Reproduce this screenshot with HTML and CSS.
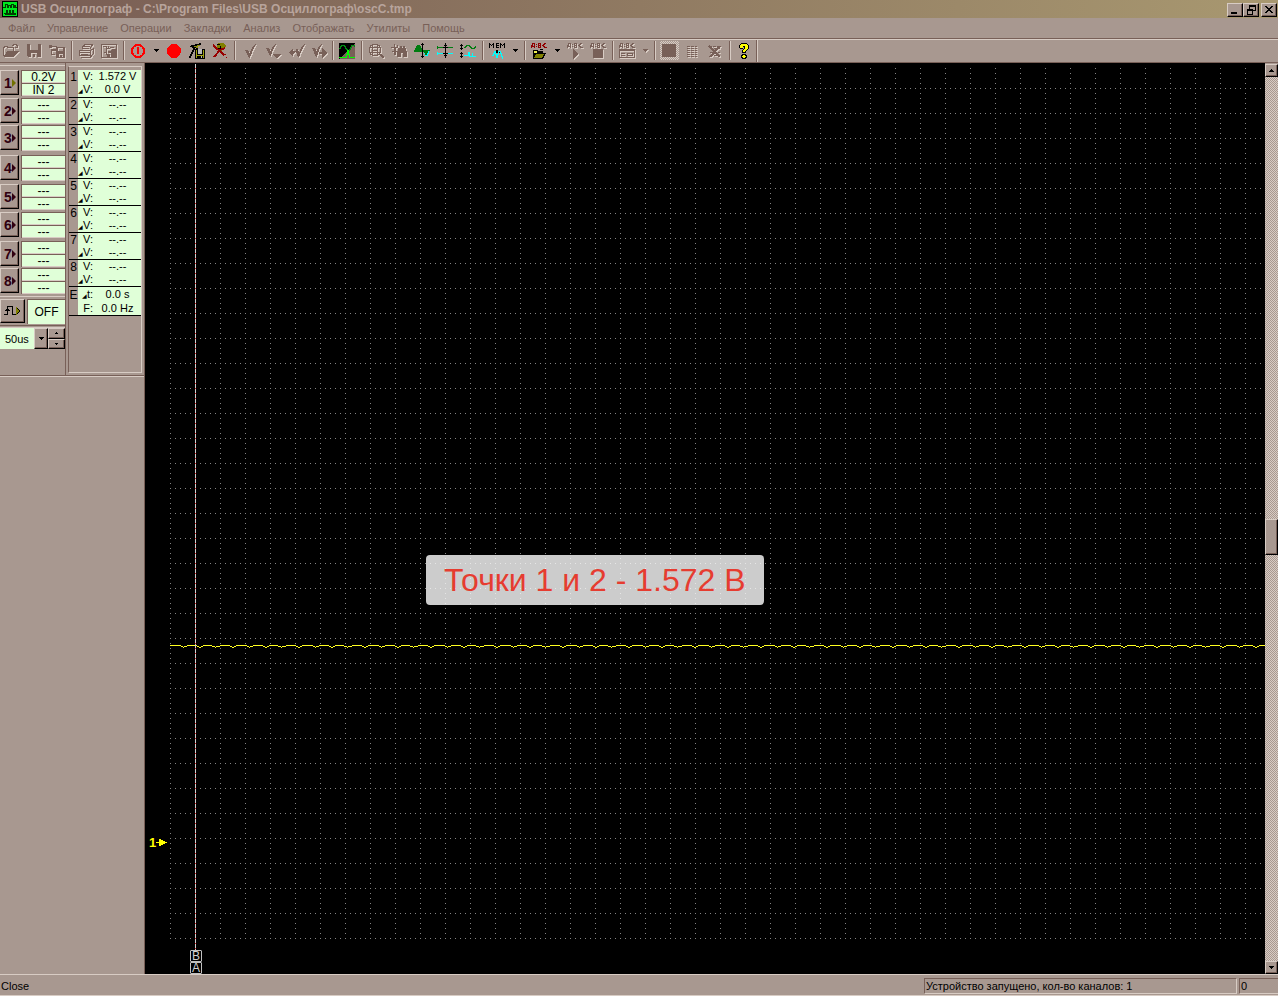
FILE: index.html
```
<!DOCTYPE html>
<html lang="ru">
<head>
    <meta charset="UTF-8">
    <meta name="viewport" content="width=device-width, initial-scale=1.0">
    <title>USB Осциллограф</title>
    <link rel="stylesheet" href="styles.css">
</head>
<body>

<header class="titlebar">
    <svg class="app-icon" viewBox="0 0 16 16"><path fill="#000" d="M0 0h16v16H0z"/><path fill="#00e820" d="M1 1h14v14H1z"/><path fill="none" stroke="#003c00" d="M1 6.500h2V3.500h2v3h1V4.500h2v2h1V3.500h2v3h1V4.500h1v2h2M2 12.500h2v-3h1v3h2v-3h1v3h2v-3h1v3h3M3 13.500h11"/></svg>
    <h1>USB Осциллограф - C:\Program Files\USB Осциллограф\oscC.tmp</h1>
    <div class="window-buttons">
        <button aria-label="Свернуть"><svg viewBox="0 0 12 10"><path d="M2 7h6v2H2z"/></svg></button>
        <button aria-label="Восстановить"><svg viewBox="0 0 12 10"><path fill="none" stroke="#000" d="M4.500 4V.500h6v5H8M4 1.500h7M2.500 4.500h5v5h-5zM2 5.500h6"/></svg></button>
        <button class="close" aria-label="Закрыть"><svg viewBox="0 0 12 10"><path d="M2 1h2v1h1v1h2V2h1V1h2v1H9v1H8v1H7v1h1v1h1v1h1v1H8V7H7V6H5v1H4v1H2V7h1V6h1V5h1V4H4V3H3V2H2z"/></svg></button>
    </div>
</header>

<nav class="menu">
    <button>Файл</button>
    <button>Управление</button>
    <button>Операции</button>
    <button>Закладки</button>
    <button>Анализ</button>
    <button>Отображать</button>
    <button>Утилиты</button>
    <button>Помощь</button>
</nav>

<div class="toolbar">
    <button class="dim" aria-label="Открыть"><svg viewBox="0 0 16 16"><path fill="none" stroke="#786058" d="M.500 13V4.500h1v-1h3v1h6V8M1 13.500h10M4 8.500h11.500M4.500 9l-3 4M15 9l-4 4M9 2.500h1v-1h3v1h1v2M12 4.500h3M14.500 2v3"/><path d="M4 9h10l-3 4H2z"/></svg></button>
    <button class="dim" aria-label="Сохранить"><svg viewBox="0 0 16 16"><path fill-rule="evenodd" d="M1 1h14v13H2l-1-1zM4 1v6h8V1zM5 10v4h2v-3h2v3h2v-4z"/></svg></button>
    <button class="dim" aria-label="Сохранить всё"><svg viewBox="0 0 16 16"><path fill-rule="evenodd" d="M0 2h3v3H0zM3 3h5v1H3zM2 6h5v2H3v3h3v1H2zM7 4h9v11H7zM9 5v3h5V5zM10 11v3h1v-2h2v2h1v-3z"/></svg></button>
    <span class="separator"></span>
    <button class="dim" aria-label="Печать"><svg viewBox="0 0 16 16"><path fill="none" stroke="#786058" d="M4.500 6V4L7 1.500h7.500L12 6M6 3.500h6M5 5.500h6M1.500 7.500h11v5h-11zM12.500 7.500l3-2v5l-3 3M2 9.500h10M3 11.500h7M3 14.500h9l2-2"/></svg></button>
    <button class="dim" aria-label="Печать осциллограммы"><svg viewBox="0 0 16 16"><path fill="none" stroke="#786058" d="M.500 1.500h15v13H.500zM2 3.500h3v8M3 9.500h2M6 5.500h3M7.500 3v3M9 4.500h4M11 6.500h4"/><path d="M7 8h3v2H7zM10 7h5v7h-5zM6 11h3v3H6z"/></svg></button>
    <span class="separator"></span>
    <button aria-label="Запуск"><svg viewBox="0 0 16 16"><g fill="none" stroke="#ff0000" stroke-width="2"><circle cx="8" cy="8" r="6"/><path d="M8 4v7"/></g></svg></button>
    <button class="drop" aria-label="Параметры запуска"><svg viewBox="0 0 5 3"><path d="M0 0h5v1H4v1H3v1H2V2H1V1H0z"/></svg></button>
    <button aria-label="Запись"><svg viewBox="0 0 16 16"><circle cx="8" cy="8" r="7" fill="#ff0000"/></svg></button>
    <button aria-label="Сохранить закладку"><svg viewBox="0 0 16 16"><path d="M2 2h4V1h4V0h2v2h-1v1H8v2h1v1H7V5H6v2H5v2H4v2H3v2H2v2H0v-2h1v-2h1V9h1V7h1V5H3V4H1V3h1z"/><path fill="#90900c" d="M5 3h3V2h3v1H9v2H7V4H5z"/><path d="M6 6h10v10H6z"/><path fill="#a0a010" d="M7 7h1v8H7zM14 7h1v8h-1zM8 12h6v1H8z"/><path fill="#b8b8b8" d="M9 6h4v5H9zM12 13h1v2h-1z"/></svg></button>
    <button aria-label="Удалить закладку"><svg viewBox="0 0 16 16"><path fill="#808000" d="M6 0h6l2 3-2 3h-2v3H8V5H5V2z"/><path fill="none" stroke="#000" d="M5 1.500h3M3 5.500h5M8.500 3v3M7 8l-5 6"/><path fill="none" stroke="#980000" stroke-width="2" d="M1 2l11 10M13 5l-5 2-6 7"/><path fill="#980000" d="M12 11h2v1h-2zM14 14h1v1h-1z"/></svg></button>
    <span class="separator"></span>
    <button class="dim check" aria-label="Закладка"><svg viewBox="0 0 16 16"><path d="M2 7h3l2 4V9l2-4 3-4h1l-3 6-2 5-1 3H6z"/></svg></button>
    <button class="dim check" aria-label="Закладка вниз"><svg viewBox="0 0 16 16"><path d="M0 5h3l2 4V7l2-4 2-2h1L7 7l-2 6H4zM6 11h9l-4 4z"/></svg></button>
    <button class="dim check" aria-label="Предыдущая закладка"><svg viewBox="0 0 16 16"><path d="M0 10l4-5v3h3V6h2l1 4 2-5 3-4h1l-3 6-3 7H9L7 9l-3 2v3z"/></svg></button>
    <button class="dim check" aria-label="Следующая закладка"><svg viewBox="0 0 16 16"><path d="M0 5h3l2 4V7l2-4 2-2h1L7 7l-2 7H4zM7 9h3V5l5 5-5 5v-4H7z"/></svg></button>
    <span class="separator"></span>
    <button aria-label="Анализ спектра"><svg viewBox="0 0 16 16"><path d="M0 0h16v16H0z"/><path fill="#786058" d="M16 0v16H1z"/><path fill="none" stroke="#008c10" d="M0 5.500h1v-2h1v-1h3v1h1v2h1v1h1v1h2v-1h1v-2h1v-2h3v1h1"/><path fill="none" stroke="#00ff00" d="M0 14.500h7v-3h1v-4h1v4h1v3h6"/></svg></button>
    <span class="separator"></span>
    <button class="dim" aria-label="Масштаб по сетке"><svg viewBox="0 0 16 16"><g fill="none" stroke="#786058"><circle cx="7" cy="7" r="6"/><path d="M1 4.500h12M1 9.500h12M4.500 2v10M9.500 2v10M4 7.500h6"/></g><path d="M11 11h2l3 3v1h-2z"/></svg></button>
    <button class="dim" aria-label="Поиск"><svg viewBox="0 0 16 16"><path fill-rule="evenodd" d="M0 4h3V1h1v3h2V2h1v3H5v3h2v1H5v3H3V9H1V8h2V5H0zM7 7V5h2V3h2v2h1V3h2v2h1v3h1v6h-4v-4h-2v4H6V9h1z"/></svg></button>
    <button aria-label="Сигнал целиком"><svg viewBox="0 0 16 16"><path fill="#00ffff" d="M6 7h10v1h-1v3h-1v2h-3v-2h-1V9H6z"/><path fill="#007c10" d="M0 7h1V5h1V3h1V2h3v1h1v2h1v2h8v1h-2v2h-1v2h-2v-2h-1V9H0z"/><path d="M8 0h1v15H8zM7 1h3v1H7zM7 13h3v1H7z"/></svg></button>
    <button aria-label="Сдвиг каналов"><svg viewBox="0 0 16 16"><path fill="#007c10" d="M0 4h16v1H0zM0 3h1v3H0z"/><path fill="#00ffff" d="M0 10h16v1H0zM0 9h1v3H0z"/><path d="M8 0h1v15H8zM7 2h3v1H7zM6 4h5v1H6zM6 10h5v1H6zM7 12h3v1H7z"/></svg></button>
    <button aria-label="Разнести каналы"><svg viewBox="0 0 16 16"><path fill="none" stroke="#007c10" d="M4 4.500h1v-1h1v-1h3v1h1v1h1v1h3v-1h1v-1h1"/><path fill="none" stroke="#00ffff" d="M4 12.500h4v-3h1v4h7M12.500 13v-3"/><path d="M1 1h1v6H1zM0 2h3v1H0zM0 5h3v1H0zM1 9h1v6H1zM0 10h3v1H0zM0 13h3v1H0z"/></svg></button>
    <span class="separator"></span>
    <button aria-label="Память"><svg viewBox="0 0 16 16"><path fill="none" stroke="#000" d="M.500 5V0M1 1.500h1M2 2.500h1M3 1.500h1M4.500 5V0M10 .500H7.500v4H10M8 2.500h2M11.500 5V0M12 1.500h1M13 2.500h1M14 1.500h1M15.500 5V0"/><path d="M7 7h2v1h1v1h1v1H5V9h1V8h1z"/><path fill="none" stroke="#00ffff" d="M3 12.500h1v-2h1v-2h1v3h1v3h1v-3h1v-3h2v2h1v3h1v2"/></svg></button>
    <button class="drop" aria-label="Список памяти"><svg viewBox="0 0 5 3"><path d="M0 0h5v1H4v1H3v1H2V2H1V1H0z"/></svg></button>
    <span class="separator"></span>
    <button aria-label="Открыть скрипт"><svg viewBox="0 0 16 16"><path fill="none" stroke="#900000" d="M.500 5V2h1V.500h2V5M1 3.500h2M5 1.500h1M5 3.500h1M7.500 5V.500h2v4H7M8 2.500h2M15 .500h-2v1h-1v2h1v1h3M11 2.500h1"/><path d="M2 7h5v1h5v2h3l-3 6H2zM9 6h3v1H9z"/><path fill="#f0f050" d="M3 8h3v2H3v4z"/><path fill="#808000" d="M5 11h8l-2 4H3z"/></svg></button>
    <button class="drop" aria-label="Список скриптов"><svg viewBox="0 0 5 3"><path d="M0 0h5v1H4v1H3v1H2V2H1V1H0z"/></svg></button>
    <button class="dim" aria-label="Запустить скрипт"><svg viewBox="0 0 16 16"><path fill="none" stroke="#786058" d="M.500 5V2h1V.500h2V5M1 3.500h2M5 1.500h1M5 3.500h1M7.500 5V.500h2v4H7M8 2.500h2M15 .500h-2v1h-1v2h1v1h3M11 2.500h1"/><path d="M6 6l6 5-6 5z"/></svg></button>
    <button class="dim" aria-label="Остановить скрипт"><svg viewBox="0 0 16 16"><path fill="none" stroke="#786058" d="M.500 5V2h1V.500h2V5M1 3.500h2M5 1.500h1M5 3.500h1M7.500 5V.500h2v4H7M8 2.500h2M15 .500h-2v1h-1v2h1v1h3M11 2.500h1"/><path d="M3 6h10v9H3z"/></svg></button>
    <span class="separator"></span>
    <button class="dim" aria-label="Окно скрипта"><svg viewBox="0 0 16 16"><path fill="none" stroke="#786058" d="M.500 5V2h1V.500h2V5M1 3.500h2M5 1.500h1M5 3.500h1M7.500 5V.500h2v4H7M8 2.500h2M15 .500h-2v1h-1v2h1v1h3M11 2.500h1M.500 6.500h15v8H.500zM1 7.500h14M2 10.500h4M2 12.500h4M8.500 10.500h5v2h-5z"/></svg></button>
    <button class="drop dim" aria-label="Окна скриптов"><svg viewBox="0 0 5 3"><path d="M0 0h5v1H4v1H3v1H2V2H1V1H0z"/></svg></button>
    <span class="separator"></span>
    <button class="pressed" aria-label="Сплошной фон"><svg viewBox="0 0 16 16"><path fill="#786058" d="M1 1h14v13H1z"/></svg></button>
    <button class="dim" aria-label="Сетка"><svg viewBox="0 0 16 16"><path fill="none" stroke="#786058" stroke-dasharray="3 1" d="M3 3.500h10M3 5.500h10M3 7.500h10M3 9.500h10M3 11.500h10M3 13.500h10"/></svg></button>
    <button class="dim" aria-label="Убрать сетку"><svg viewBox="0 0 16 16"><path fill="none" stroke="#786058" stroke-dasharray="3 1" d="M2 3.500h11M3 5.500h10M3 9.500h10M3 12.500h10"/><path fill="none" stroke="#786058" stroke-width="2" d="M2 3l11 11M13 3L3 14"/></svg></button>
    <span class="separator"></span>
    <button aria-label="Справка"><svg viewBox="0 0 16 16"><path d="M5 0h6v1h1v1h1v4h-1v1h-1v1h-1v2H6V7h1V6h1V4H7v2H4V5H3V2h1V1h1zM6 11h4v1h1v3h-1v1H6v-1H5v-3h1z"/><path fill="#ffff00" d="M5 1h6v1h1v4h-1v1h-1v1H9v1H7V7h1V6h1V3H7v2H4V2h1zM7 12h2v1h1v1H9v1H7v-1H6v-1h1z"/></svg></button>
    <span class="separator end"></span>
</div>

<main class="workspace">
    <aside class="panels">
        <section class="channels">
            <div class="channel-list">
                <button class="active"><b>1</b><i></i></button>
                <div><input type="text" value="0.2V" aria-label="Канал 1, предел" readonly><input type="text" value="IN 2" aria-label="Канал 1, вход" readonly></div>
                <button><b>2</b><i></i></button>
                <div><input type="text" value="---" aria-label="Канал 2, предел" readonly><input type="text" value="---" aria-label="Канал 2, вход" readonly></div>
                <button><b>3</b><i></i></button>
                <div><input type="text" value="---" aria-label="Канал 3, предел" readonly><input type="text" value="---" aria-label="Канал 3, вход" readonly></div>
                <button><b>4</b><i></i></button>
                <div><input type="text" value="---" aria-label="Канал 4, предел" readonly><input type="text" value="---" aria-label="Канал 4, вход" readonly></div>
                <button><b>5</b><i></i></button>
                <div><input type="text" value="---" aria-label="Канал 5, предел" readonly><input type="text" value="---" aria-label="Канал 5, вход" readonly></div>
                <button><b>6</b><i></i></button>
                <div><input type="text" value="---" aria-label="Канал 6, предел" readonly><input type="text" value="---" aria-label="Канал 6, вход" readonly></div>
                <button><b>7</b><i></i></button>
                <div><input type="text" value="---" aria-label="Канал 7, предел" readonly><input type="text" value="---" aria-label="Канал 7, вход" readonly></div>
                <button><b>8</b><i></i></button>
                <div><input type="text" value="---" aria-label="Канал 8, предел" readonly><input type="text" value="---" aria-label="Канал 8, вход" readonly></div>
            </div>
            <div class="trigger">
                <button aria-label="Синхронизация"><svg viewBox="0 0 18 12"><path fill="none" stroke="#000" d="M1 9.500h3.500v-8H9v8h4v-5M2 5.500h5M3 4.500h3"/><path fill="#808000" d="M13 2l4 4-4 4z"/><path fill="none" stroke="#000" d="M14 3l3 3-3 3"/></svg></button>
                <input type="text" value="OFF" aria-label="Режим синхронизации" readonly>
            </div>
            <div class="timebase">
                <div class="combo">
                    <select aria-label="Развёртка"><option>50us</option></select>
                    <span class="combo-arrow"><svg viewBox="0 0 5 3"><path d="M0 0h5v1H4v1H3v1H2V2H1V1H0z"/></svg></span>
                </div>
                <div class="spin">
                    <button aria-label="Больше"><svg viewBox="0 0 3 2"><path d="M1 0h1v1h1v1H0V1h1z"/></svg></button>
                    <button aria-label="Меньше"><svg viewBox="0 0 3 2"><path d="M0 0h3v1H2v1H1V1H0z"/></svg></button>
                </div>
            </div>
        </section>
        <section class="measures">
            <table>
                <tr><th>1</th><td>V:<br><small>◢</small>V:</td><td>1.572 V<br>0.0 V</td></tr>
                <tr><th>2</th><td>V:<br><small>◢</small>V:</td><td>--.--<br>--.--</td></tr>
                <tr><th>3</th><td>V:<br><small>◢</small>V:</td><td>--.--<br>--.--</td></tr>
                <tr><th>4</th><td>V:<br><small>◢</small>V:</td><td>--.--<br>--.--</td></tr>
                <tr><th>5</th><td>V:<br><small>◢</small>V:</td><td>--.--<br>--.--</td></tr>
                <tr><th>6</th><td>V:<br><small>◢</small>V:</td><td>--.--<br>--.--</td></tr>
                <tr><th>7</th><td>V:<br><small>◢</small>V:</td><td>--.--<br>--.--</td></tr>
                <tr><th>8</th><td>V:<br><small>◢</small>V:</td><td>--.--<br>--.--</td></tr>
                <tr class="time"><th>E</th><td><small>◢</small>t:<br>F:</td><td>0.0 s<br>0.0 Hz</td></tr>
            </table>
        </section>
    </aside>

    <section class="scope">
        <svg class="grid" width="100%" height="100%">
            <defs>
                <!-- one division: dots every 5px along the top and left edges -->
                <pattern id="division" y="20" width="25" height="25" patternUnits="userSpaceOnUse">
                    <path fill="#848484" d="M0 0h1v1H0zM5 0h1v1H5zM10 0h1v1h-1zM15 0h1v1h-1zM20 0h1v1h-1zM0 5h1v1H0zM0 10h1v1H0zM0 15h1v1H0zM0 20h1v1H0z"/>
                </pattern>
                <pattern id="signal" width="66" height="3" patternUnits="userSpaceOnUse" y="577">
                    <path fill="#ffff20" d="M0 0h11v1H0zM11 1h2v1h-2zM13 2h1v1h-1zM14 1h3v1h-3zM17 0h10v1H17zM27 1h2v1h-2zM29 2h2v1h-2zM31 1h2v1h-2zM33 0h9v1h-9zM42 1h3v1h-3zM45 2h1v1h-1zM46 1h4v1h-4zM50 0h10v1H50zM60 1h2v1h-2zM62 2h2v1h-2zM64 1h2v1h-2z"/>
                </pattern>
            </defs>
            <rect width="100%" height="100%" fill="url(#division)"/>
            <rect y="577" width="100%" height="3" fill="url(#signal)"/>
        </svg>
        <div class="cursor"><span>B</span><span>A</span></div>
        <div class="zero-mark"><b>1</b><svg viewBox="0 0 11 7"><path fill="#ffff00" d="M0 3h3V0h2v1h2v1h2v1h2v1H9v1H7v1H5v1H3V4H0z"/></svg></div>
        <p class="caption">Точки 1 и 2 - 1.572 В</p>
    </section>

    <div class="scrollbar">
        <button aria-label="Вверх"><svg viewBox="0 0 5 3"><path d="M2 0h1v1h1v1h1v1H0V2h1V1h1z"/></svg></button>
        <div class="track"><span class="thumb"></span></div>
        <button aria-label="Вниз"><svg viewBox="0 0 5 3"><path d="M0 0h5v1H4v1H3v1H2V2H1V1H0z"/></svg></button>
    </div>
</main>

<footer class="status">
    <span class="hint">Close</span>
    <span class="cell device">Устройство запущено, кол-во каналов: 1</span>
    <span class="cell count">0</span>
</footer>

</body>
</html>
```
FILE: styles.css
```
* {
    box-sizing: border-box;
}
body {
    display: flex;
    flex-direction: column;
    height: 100vh;
    margin: 0;
    overflow: hidden;
    background-color: #a89890;
    color: #000;
    font-family: "Liberation Sans", Arial, sans-serif;
    font-size: 11px;
}
button, input, select {
    margin: 0;
    padding: 0;
    border: 0;
    border-radius: 0;
    background: none;
    color: inherit;
    font: inherit;
}
svg {
    display: block;
    shape-rendering: crispEdges;
}

/* Title bar */
.titlebar {
    display: flex;
    align-items: center;
    height: 18px;
    padding: 0 1px 0 2px;
    background: linear-gradient(to right, #785c54, #a89870);
}
.app-icon {
    width: 16px;
    height: 16px;
}
.titlebar h1 {
    flex: 1;
    margin: 0 0 0 3px;
    color: #b8a49c;
    font-size: 12px;
    line-height: 18px;
    white-space: nowrap;
}
.window-buttons {
    display: flex;
    padding-top: 1px;
}
.window-buttons button {
    width: 16px;
    height: 14px;
    padding: 1px;
}
.window-buttons svg {
    width: 12px;
    height: 10px;
}
.window-buttons .close {
    margin-left: 2px;
}
.window-buttons button, .channel-list button, .trigger button, .spin button, .combo-arrow, .scrollbar button, .thumb {
    border: 1px solid;
    border-color: #d8ccc4 #000 #000 #d8ccc4;
    background-color: #a89890;
    box-shadow: inset -1px -1px #786058;
}

/* Menu */
.menu {
    display: flex;
    gap: 12px;
    height: 20px;
    padding-left: 8px;
    color: #786058;
}
.menu button {
    line-height: 20px;
}

/* Toolbar */
.toolbar {
    display: flex;
    height: 25px;
    border-top: 1px solid #786058;
    border-bottom: 1px solid #786058;
    box-shadow: inset 0 1px #d8ccc4;
}
.toolbar button {
    display: flex;
    align-items: center;
    justify-content: center;
    width: 23px;
    height: 23px;
    padding: 1px 1px 0 0;
}
.toolbar svg {
    width: 16px;
    height: 16px;
}
.toolbar .drop {
    width: 13px;
    padding: 0;
}
.toolbar .drop svg {
    width: 5px;
    height: 3px;
}
.toolbar .dim svg {
    fill: #786058;
    filter: drop-shadow(1px 1px 0 #d8ccc4);
}
.toolbar .check {
    padding-left: 3px;
}
.toolbar .pressed {
    height: 19px;
    width: 19px;
    margin: 2px;
    background: repeating-conic-gradient(#d8ccc4 0 25%, #a89890 0 50%) 0 0 / 2px 2px;
}
.separator {
    width: 2px;
    height: 19px;
    margin: 2px;
    border-left: 1px solid #786058;
    border-right: 1px solid #d8ccc4;
}
.separator.end {
    height: 22px;
    margin: 1px 0;
}

/* Workspace */
.workspace {
    display: flex;
    flex: 1;
    min-height: 0;
}
.panels {
    display: flex;
    align-items: flex-start;
    width: 145px;
    border-right: 1px solid #786058;
}
.channels, .measures {
    height: 313px;
    border-bottom: 1px solid #786058;
    box-shadow: 0 1px #d8ccc4;
}
.channels {
    width: 66px;
    padding-top: 2px;
    border-right: 1px solid #786058;
}
.channel-list {
    display: grid;
    grid-template-columns: 19px 1fr;
    grid-template-rows: 28px 27px 30px 29px 28px 29px 27px 28px;
    column-gap: 2px;
    height: 232px;
    padding-top: 4px;
    border-top: 1px solid #d8ccc4;
    border-bottom: 1px solid #d8ccc4;
}
.channel-list button {
    display: flex;
    align-items: center;
    height: 25px;
    padding-left: 3px;
    color: #300010;
    font-size: 14px;
}
.channel-list i {
    border: 4px solid transparent;
    border-left-color: #300010;
    border-right: 0;
}
.channel-list .active i {
    border-left-color: #707000;
}
.channel-list input {
    display: block;
    width: 100%;
    height: 13px;
    border: 1px solid #786058;
    border-width: 1px 0 0 1px;
    box-shadow: inset 0 -1px #d8ccc4;
    background-color: #e0ffd8;
    font-size: 12px;
    text-align: center;
}
.trigger {
    display: flex;
    gap: 2px;
    height: 29px;
    padding-top: 2px;
    border-bottom: 1px solid #786058;
}
.trigger button {
    width: 25px;
    height: 24px;
    padding: 4px 2px;
}
.trigger svg {
    width: 18px;
    height: 12px;
}
.trigger input {
    flex: 1;
    min-width: 0;
    height: 25px;
    border: 1px solid #786058;
    border-width: 1px 0 0 1px;
    background-color: #e0ffd8;
    font-size: 12px;
    text-align: center;
}
.timebase {
    display: flex;
    height: 22px;
    margin-top: 1px;
    border-top: 1px solid #d8ccc4;
}
.combo {
    position: relative;
    width: 48px;
}
.combo select {
    appearance: none;
    width: 34px;
    height: 21px;
    padding-left: 5px;
    background-color: #e0ffd8;
}
.combo-arrow {
    position: absolute;
    top: 0;
    right: 0;
    display: grid;
    place-content: center;
    width: 14px;
    height: 21px;
    pointer-events: none;
}
.combo-arrow svg, .scrollbar svg {
    width: 5px;
    height: 3px;
}
.spin {
    display: flex;
    flex: 1;
    flex-direction: column;
}
.spin button {
    display: grid;
    flex: 1;
    place-content: center;
}
.spin svg {
    width: 3px;
    height: 2px;
}

/* Measurements */
.measures {
    position: relative;
    flex: 1;
    padding: 3px 2px 2px;
}
.measures::after {
    content: "";
    position: absolute;
    inset: 3px 2px 2px;
    border: 1px solid #d8ccc4;
    border-left-color: #786058;
    pointer-events: none;
}
.measures table {
    width: 73px;
    margin: 4px 0 0 1px;
    border-collapse: collapse;
    line-height: 13px;
}
.measures tr {
    height: 27px;
    border-bottom: 1px solid #000;
}
.measures .time {
    height: 29px;
    line-height: 14px;
}
.measures th {
    width: 9px;
    padding: 1px 0 0;
    font-size: 12px;
    font-weight: normal;
    vertical-align: top;
}
.measures td {
    padding: 0;
    background-color: #e0ffd8;
    text-align: center;
    white-space: nowrap;
}
.measures td:nth-child(2) {
    width: 13px;
    text-align: right;
}
.measures small {
    font-size: 6px;
    line-height: 1px;
}

/* Oscilloscope screen */
.scope {
    position: relative;
    flex: 1;
    padding: 5px 0 35px 25px;
    background-color: #000;
}
.cursor {
    position: absolute;
    top: 1px;
    bottom: 0;
    left: 45px;
    display: flex;
    flex-direction: column;
    align-items: center;
    width: 12px;
    color: #d0d0d0;
}
.cursor::before {
    content: "";
    flex: 1;
    width: 1px;
    margin-left: -1px;
    background: repeating-linear-gradient(#d0d0d0 0 4px, #d82020 4px 5px);
}
.cursor span {
    width: 12px;
    height: 12px;
    border: 1px solid #c0c0c0;
    border-radius: 1px;
    font-size: 12px;
    line-height: 11px;
    text-align: center;
}
.zero-mark {
    position: absolute;
    bottom: 124px;
    left: 4px;
    display: flex;
    align-items: center;
    color: #ffff00;
    font-size: 13px;
}
.zero-mark svg {
    width: 11px;
    height: 7px;
}
.caption {
    position: absolute;
    top: 492px;
    left: 281px;
    margin: 0;
    padding: 0 18px;
    border-radius: 4px;
    background-color: rgba(255, 255, 255, 0.8);
    color: #e63c30;
    font-size: 32px;
    line-height: 50px;
    white-space: nowrap;
}

/* Scroll bar */
.scrollbar {
    display: flex;
    flex-direction: column;
    width: 13px;
    padding-top: 1px;
}
.scrollbar button {
    display: grid;
    place-content: center;
    height: 13px;
}
.track {
    flex: 1;
    padding-top: 442px;
    background: repeating-conic-gradient(#d8ccc4 0 25%, #a89890 0 50%) 0 0 / 2px 2px;
}
.thumb {
    display: block;
    height: 36px;
}

/* Status bar */
.status {
    display: flex;
    gap: 2px;
    height: 22px;
    padding: 3px 0 1px;
    border-top: 1px solid #d8ccc4;
    border-bottom: 1px solid #d8ccc4;
    line-height: 16px;
}
.hint {
    flex: 1;
    padding: 0 1px;
}
.cell {
    padding-left: 1px;
    border: 1px solid;
    border-color: #786058 #d8ccc4 #d8ccc4 #786058;
    line-height: 14px;
}
.device {
    width: 313px;
}
.count {
    width: 39px;
    border-right: 0;
}
```
